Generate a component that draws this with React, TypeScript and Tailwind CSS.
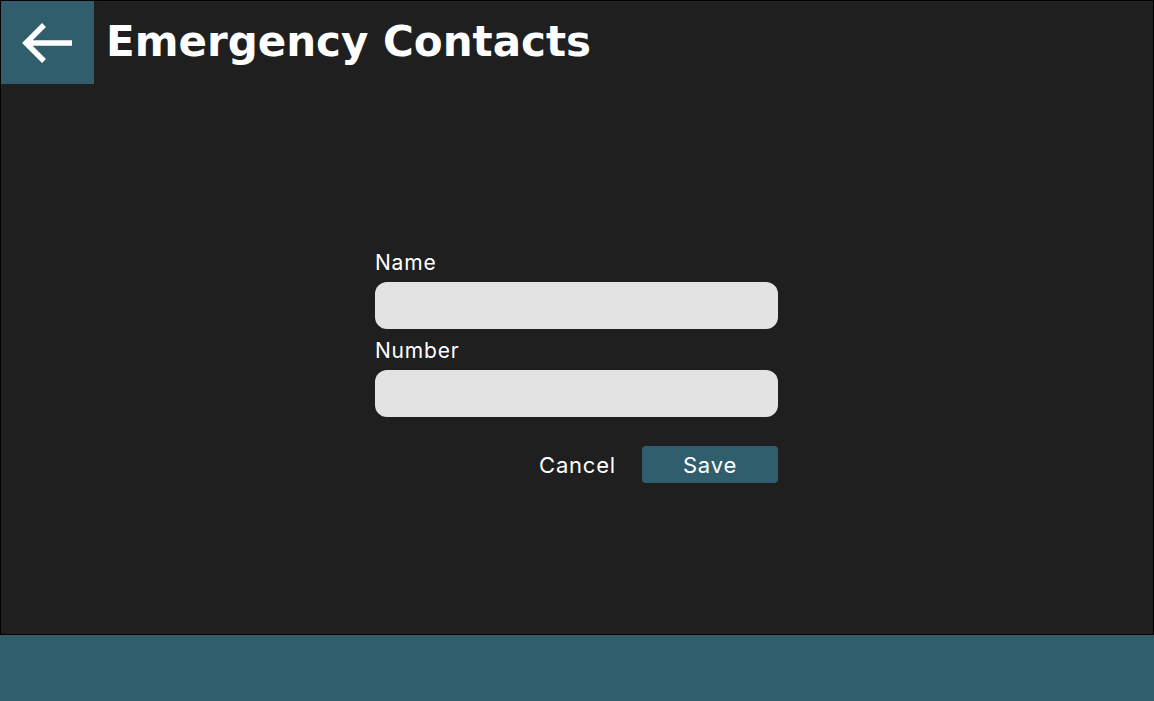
import React, { useState } from "react";

const BackArrow = () => (
  <svg width="93" height="83" viewBox="0 0 93 83" fill="none">
    <path d="M71 42H26M43 24L25 42l18 18" stroke="white" strokeWidth="5.5" strokeLinejoin="miter" />
  </svg>
);

const App = () => {
  const [name, setName] = useState("");
  const [number, setNumber] = useState("");

  return (
    <div className="w-[1154px] h-[701px] flex flex-col font-['Inter',sans-serif] text-white">
      <section className="flex-1 bg-[#1f1f1f] border border-black flex flex-col">
        {/* header */}
        <header className="flex items-start h-[83px]">
          <button className="w-[93px] h-[83px] bg-[#305e6c] flex items-center justify-center">
            <BackArrow />
          </button>
          <h1 className="ml-[12px] mt-[13px] font-['DejaVu_Sans',sans-serif] text-[42px] leading-[56px] font-bold">
            Emergency Contacts
          </h1>
        </header>

        {/* form */}
        <div className="flex justify-center mt-[167px]">
          <form className="w-[403px] mr-[1px] flex flex-col">
            <label htmlFor="name" className="text-[21px] leading-[24px] tracking-[0.8px]">
              Name
            </label>
            <input
              id="name"
              value={name}
              onChange={(e) => setName(e.target.value)}
              className="mt-[7px] h-[47px] rounded-[12px] bg-[#e3e3e3] text-black px-4 outline-none"
            />
            <label htmlFor="number" className="mt-[10px] text-[21px] leading-[24px] tracking-[0.8px]">
              Number
            </label>
            <input
              id="number"
              value={number}
              onChange={(e) => setNumber(e.target.value)}
              className="mt-[7px] h-[47px] rounded-[12px] bg-[#e3e3e3] text-black px-4 outline-none"
            />
            <div className="flex justify-end items-center mt-[29px] gap-[26px]">
              <button type="button" className="text-[22px] leading-[26px] tracking-[0.8px]">
                Cancel
              </button>
              <button type="button" className="w-[136px] h-[37px] rounded-[4px] bg-[#305e6c] text-[22px] leading-[26px] tracking-[0.8px]">
                Save
              </button>
            </div>
          </form>
        </div>
      </section>
      <footer className="h-[66px] bg-[#305e6c]" />
    </div>
  );
};

export default App;
